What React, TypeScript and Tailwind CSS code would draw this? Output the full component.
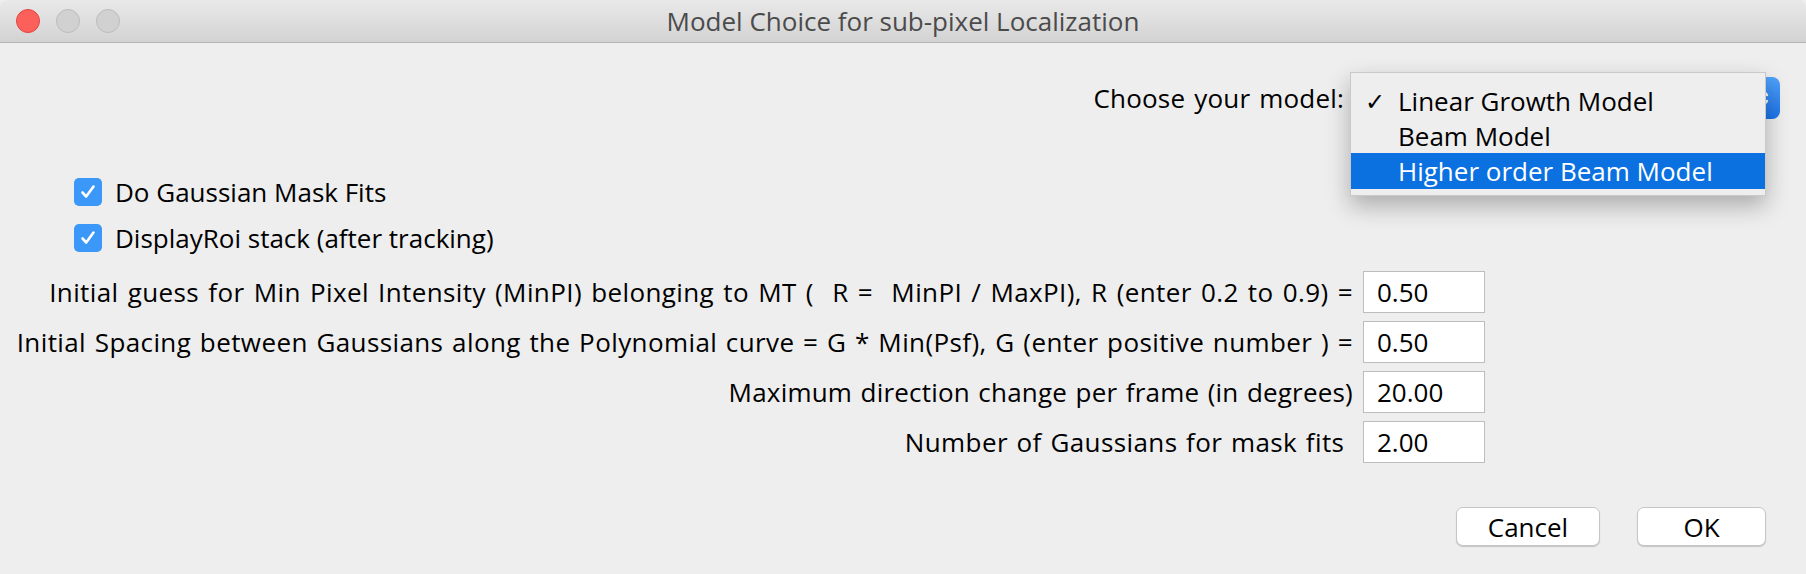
import React from 'react';

const font = { fontFamily: '"Open Sans", "DejaVu Sans", sans-serif' };

const fields = [
    {
        label: 'Initial guess for Min Pixel Intensity (MinPI) belonging to MT (  R =  MinPI / MaxPI), R (enter 0.2 to 0.9) =',
        value: '0.50',
        spacing: 'tracking-[0.4px] [word-spacing:2px]',
    },
    {
        label: 'Initial Spacing between Gaussians along the Polynomial curve = G * Min(Psf), G (enter positive number ) =',
        value: '0.50',
        spacing: 'tracking-[0.4px] [word-spacing:1.5px]',
    },
    {
        label: 'Maximum direction change per frame (in degrees)',
        value: '20.00',
        spacing: 'tracking-[0.2px] [word-spacing:1.5px]',
    },
    {
        label: 'Number of Gaussians for mask fits ',
        value: '2.00',
        spacing: 'tracking-[0.4px] [word-spacing:1.5px]',
    },
];

const models = ['Linear Growth Model', 'Beam Model', 'Higher order Beam Model'];

const Check: React.FC<{ label: string }> = ({ label }) => (
    <div className="flex items-center h-[28px] gap-[13px]">
        <div className="w-[28px] h-[28px] rounded-[5px] bg-[#3b97f8] flex items-center justify-center">
            <svg width="18" height="18" viewBox="0 0 18 18">
                <path d="M3.5 9.5 L7.2 13.5 L14.5 3.5" fill="none" stroke="white" strokeWidth="2.6" strokeLinecap="round" strokeLinejoin="round" />
            </svg>
        </div>
        <span className="text-[26px] leading-none text-black">{label}</span>
    </div>
);

const App: React.FC = () => {
    return (
        <div className="w-[1806px] h-[574px] bg-[#eeeeee] overflow-hidden flex flex-col" style={font}>
            {/* title bar */}
            <div className="h-[43px] shrink-0 grid grid-cols-[1fr_auto_1fr] items-center bg-gradient-to-b from-[#e9e9e9] to-[#d3d3d3] border-b border-[#b4b4b4] rounded-t-[8px]">
                <div className="flex items-center gap-[16px] pl-[16px]">
                    <div className="w-[24px] h-[24px] rounded-full bg-[#fc605b] border border-[#e0463f]" />
                    <div className="w-[24px] h-[24px] rounded-full bg-[#d1d1d1] border border-[#bdbdbd]" />
                    <div className="w-[24px] h-[24px] rounded-full bg-[#d1d1d1] border border-[#bdbdbd]" />
                </div>
                <div className="text-[26px] text-[#4b4b4b] leading-none">Model Choice for sub-pixel Localization</div>
                <div />
            </div>

            {/* model choice */}
            <div className="mt-[34px] flex items-center justify-end pr-[26px] gap-[8px]">
                <span className="text-[26px] leading-none text-black tracking-[0.2px] [word-spacing:2px]">Choose your model:</span>
                <div className="relative w-[428px] h-[42px]">
                    <div className="absolute inset-0 rounded-[8px] bg-white border border-[#c4c4c4]" />
                    <div className="absolute right-0 top-0 w-[34px] h-[42px] rounded-r-[8px] bg-gradient-to-b from-[#4fa2fb] to-[#1a73ea] flex items-center justify-center">
                        <svg width="14" height="26" viewBox="0 0 14 26">
                            <path d="M3 10 L7 5 L11 10 M3 16 L7 21 L11 16" fill="none" stroke="white" strokeWidth="2.4" strokeLinecap="round" strokeLinejoin="round" />
                        </svg>
                    </div>
                    {/* open menu */}
                    <div className="absolute left-[-2px] top-[-5px] w-[416px] h-[124px] bg-[#eeeeee] border border-[#c9c9c9] shadow-[0_10px_22px_rgba(0,0,0,0.28)] pt-[10px] z-10">
                        {models.map((m, i) => (
                            <div
                                key={m}
                                className={
                                    'flex items-center h-[35px] text-[26px] leading-none ' +
                                    (i === 2 ? 'bg-[#0b70e0] text-white h-[36px]' : 'text-black')
                                }
                            >
                                <span className="w-[47px] pl-[14px] text-[24px]">{i === 0 ? '✓' : ''}</span>
                                <span>{m}</span>
                            </div>
                        ))}
                    </div>
                </div>
            </div>

            {/* check boxes */}
            <div className="mt-[59px] pl-[74px] flex flex-col gap-[18px]">
                <Check label="Do Gaussian Mask Fits" />
                <Check label="DisplayRoi stack (after tracking)" />
            </div>

            {/* numeric fields */}
            <div className="mt-[19px] w-[1485px] flex flex-col gap-[8px]">
                {fields.map((f) => (
                    <div key={f.label} className="flex items-center justify-end gap-[10px] h-[42px]">
                        <span className={'text-[26px] leading-none text-black whitespace-pre ' + f.spacing}>{f.label}</span>
                        <div className="w-[122px] h-[42px] bg-white border border-[#bdbdbd] flex items-center pl-[13px] text-[26px] text-black leading-none">
                            {f.value}
                        </div>
                    </div>
                ))}
            </div>

            {/* buttons */}
            <div className="mt-[44px] flex justify-end pr-[40px] gap-[37px]">
                <button className="w-[144px] h-[39px] rounded-[7px] bg-white border border-[#c6c6c6] shadow-[0_1px_1px_rgba(0,0,0,0.18)] text-[26px] leading-none text-black">
                    Cancel
                </button>
                <button className="w-[129px] h-[39px] rounded-[7px] bg-white border border-[#c6c6c6] shadow-[0_1px_1px_rgba(0,0,0,0.18)] text-[26px] leading-none text-black">
                    OK
                </button>
            </div>
        </div>
    );
};

export default App;
